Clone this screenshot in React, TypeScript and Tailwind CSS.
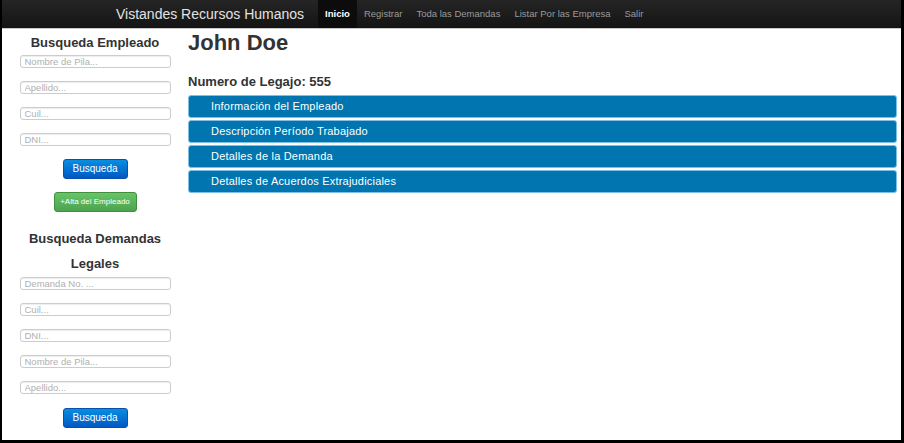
// Vistandes Recursos Humanos — employee detail page

const navLinks = ['Inicio', 'Registrar', 'Toda las Demandas', 'Listar Por las Empresa', 'Salir'];

const sections = [
  'Información del Empleado',
  'Descripción Período Trabajado',
  'Detalles de la Demanda',
  'Detalles de Acuerdos Extrajudiciales',
];

function Field({ placeholder }: { placeholder: string }) {
  return (
    <input
      placeholder={placeholder}
      className="block h-[13px] w-[151px] rounded-[3px] border border-[#cccccc] bg-white px-[4px] py-0 text-[9.5px] leading-none text-[#555] shadow-[inset_0_1px_1px_rgba(0,0,0,0.075)] outline-none placeholder:text-[#b0b0b0]"
    />
  );
}

function PrimaryButton({ className }: { className: string }) {
  return (
    <button
      className={`${className} block h-[20px] w-[65px] rounded-[3px] border border-[#0a4fa8] bg-gradient-to-b from-[#0a8ee0] to-[#0458c4] text-[10px] leading-none text-white`}
    >
      Busqueda
    </button>
  );
}

export default function App() {
  return (
    <div
      className="flex h-[443px] w-[904px] flex-col overflow-hidden border-b-[3px] border-l-2 border-r-[3px] border-black bg-white text-[#333]"
      style={{ fontFamily: '"Liberation Sans", Arial, sans-serif' }}
    >
      {/* navbar */}
      <div className="flex h-[29px] shrink-0 items-stretch border-b border-[#c9c9c9] bg-gradient-to-b from-[#252525] to-[#141414] pl-[114px]">
        <div className="flex items-center pr-[14px] text-[14px] text-[#e2e2e2]">Vistandes Recursos Humanos</div>
        <nav className="flex items-stretch">
          {navLinks.map((l, i) => (
            <a
              key={l}
              className={
                i === 0
                  ? 'flex items-center bg-[#0c0c0c] px-[7px] text-[9.5px] font-bold text-white'
                  : 'flex items-center px-[7px] text-[9.5px] text-[#9a9a9a]'
              }
            >
              {l}
            </a>
          ))}
        </nav>
      </div>

      <div className="flex flex-1">
        {/* sidebar */}
        <aside className="flex w-[186px] shrink-0 flex-col items-center">
          <h3 className="mt-[4px] text-[13px] font-bold leading-[20px]">Busqueda Empleado</h3>
          <div className="mt-[2px] flex flex-col gap-[13px]">
            <Field placeholder="Nombre de Pila..." />
            <Field placeholder="Apellido..." />
            <Field placeholder="Cuil..." />
            <Field placeholder="DNI..." />
          </div>
          <PrimaryButton className="mt-[13px]" />
          <button className="mt-[13px] block h-[20px] w-[83px] rounded-[3px] border border-[#3f8f3f] bg-gradient-to-b from-[#66c566] to-[#4ea34e] text-[8px] leading-none text-white">
            +Alta del Empleado
          </button>
          <h3 className="mt-[14px] w-[150px] text-center text-[13px] font-bold leading-[25px]">
            Busqueda Demandas Legales
          </h3>
          <div className="mt-[1px] flex flex-col gap-[13px]">
            <Field placeholder="Demanda No. ..." />
            <Field placeholder="Cuil..." />
            <Field placeholder="DNI..." />
            <Field placeholder="Nombre de Pila..." />
            <Field placeholder="Apellido..." />
          </div>
          <PrimaryButton className="mt-[14px]" />
        </aside>

        {/* main */}
        <main className="flex flex-1 flex-col pr-[4px]">
          <h1 className="mt-[1px] text-[22px] font-bold leading-[26px]">John Doe</h1>
          <h4 className="mt-[16px] text-[13px] font-bold leading-[20px]">Numero de Legajo: 555</h4>
          <div className="mt-[3px] flex flex-col gap-[2px]">
            {sections.map((s) => (
              <div
                key={s}
                className="flex h-[23px] items-center rounded-[3px] border border-[#7cc0e4] bg-[#0075b0] pl-[22px] text-[11px] tracking-[0.2px] text-white"
              >
                {s}
              </div>
            ))}
          </div>
        </main>
      </div>
    </div>
  );
}
